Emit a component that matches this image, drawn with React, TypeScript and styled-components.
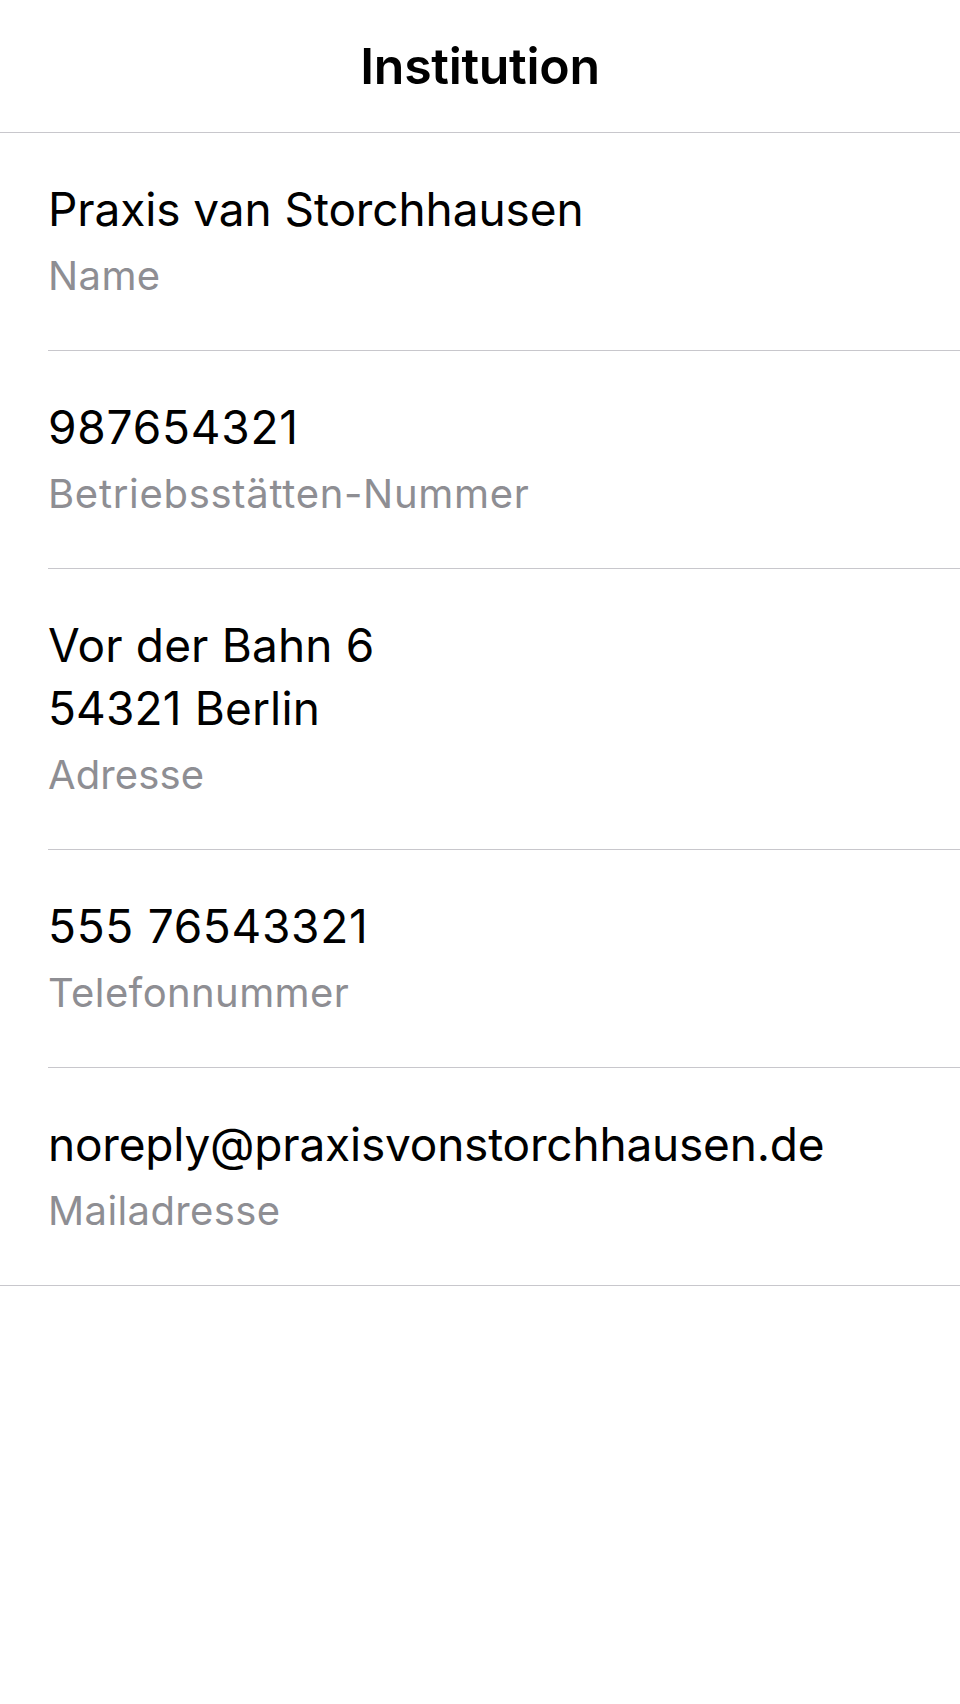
import React from "react";
import styled, { createGlobalStyle } from "styled-components";

const GlobalStyle = createGlobalStyle`
  html, body {
    margin: 0;
    padding: 0;
    background: #ffffff;
  }
  body {
    font-family: Inter, "Noto Sans", "Liberation Sans", sans-serif;
    color: #000000;
    -webkit-font-smoothing: antialiased;
  }
`;

const Screen = styled.div`
  width: 960px;
  min-height: 1704px;
  background: #ffffff;
  display: flex;
  flex-direction: column;
`;

const NavBar = styled.header`
  height: 132px;
  display: flex;
  align-items: center;
  justify-content: center;
  border-bottom: 1px solid #c8c7cc;
`;

const Title = styled.h1`
  margin: 0;
  font-size: 50px;
  line-height: 50px;
  font-weight: 600;
  letter-spacing: -0.3px;
`;

const List = styled.ul`
  list-style: none;
  margin: 0;
  padding: 0;
  border-bottom: 1px solid #c8c7cc;
`;

const Row = styled.li`
  padding-left: 48px;
`;

const RowInner = styled.div<{ $last?: boolean }>`
  display: flex;
  flex-direction: column;
  padding: 45px 0 49px 0;
  border-bottom: ${(p) => (p.$last ? "none" : "1px solid #c8c7cc")};
`;

const Value = styled.div<{ $tracking: number }>`
  font-size: 46px;
  line-height: 63px;
  font-weight: 400;
  letter-spacing: ${(p) => p.$tracking}px;
  color: #000000;
  white-space: pre-line;
`;

const Label = styled.div<{ $tracking: number }>`
  margin-top: 10px;
  font-size: 40px;
  line-height: 50px;
  font-weight: 400;
  letter-spacing: ${(p) => p.$tracking}px;
  color: #8e8e93;
`;

const items = [
  { value: "Praxis van Storchhausen", label: "Name", vt: -0.1, lt: 0.4 },
  { value: "987654321", label: "Betriebsstätten-Nummer", vt: 0.8, lt: 0.7 },
  { value: "Vor der Bahn 6\n54321 Berlin", label: "Adresse", vt: 0.15, lt: 0.1 },
  { value: "555 76543321", label: "Telefonnummer", vt: 0.7, lt: 0.4 },
  { value: "noreply@praxisvonstorchhausen.de", label: "Mailadresse", vt: -0.2, lt: 0.4 },
];

export default function App() {
  return (
    <>
      <GlobalStyle />
      <Screen>
        <NavBar>
          <Title>Institution</Title>
        </NavBar>
        <List>
          {items.map((it, i) => (
            <Row key={it.label}>
              <RowInner $last={i === items.length - 1}>
                <Value $tracking={it.vt}>{it.value}</Value>
                <Label $tracking={it.lt}>{it.label}</Label>
              </RowInner>
            </Row>
          ))}
        </List>
      </Screen>
    </>
  );
}
